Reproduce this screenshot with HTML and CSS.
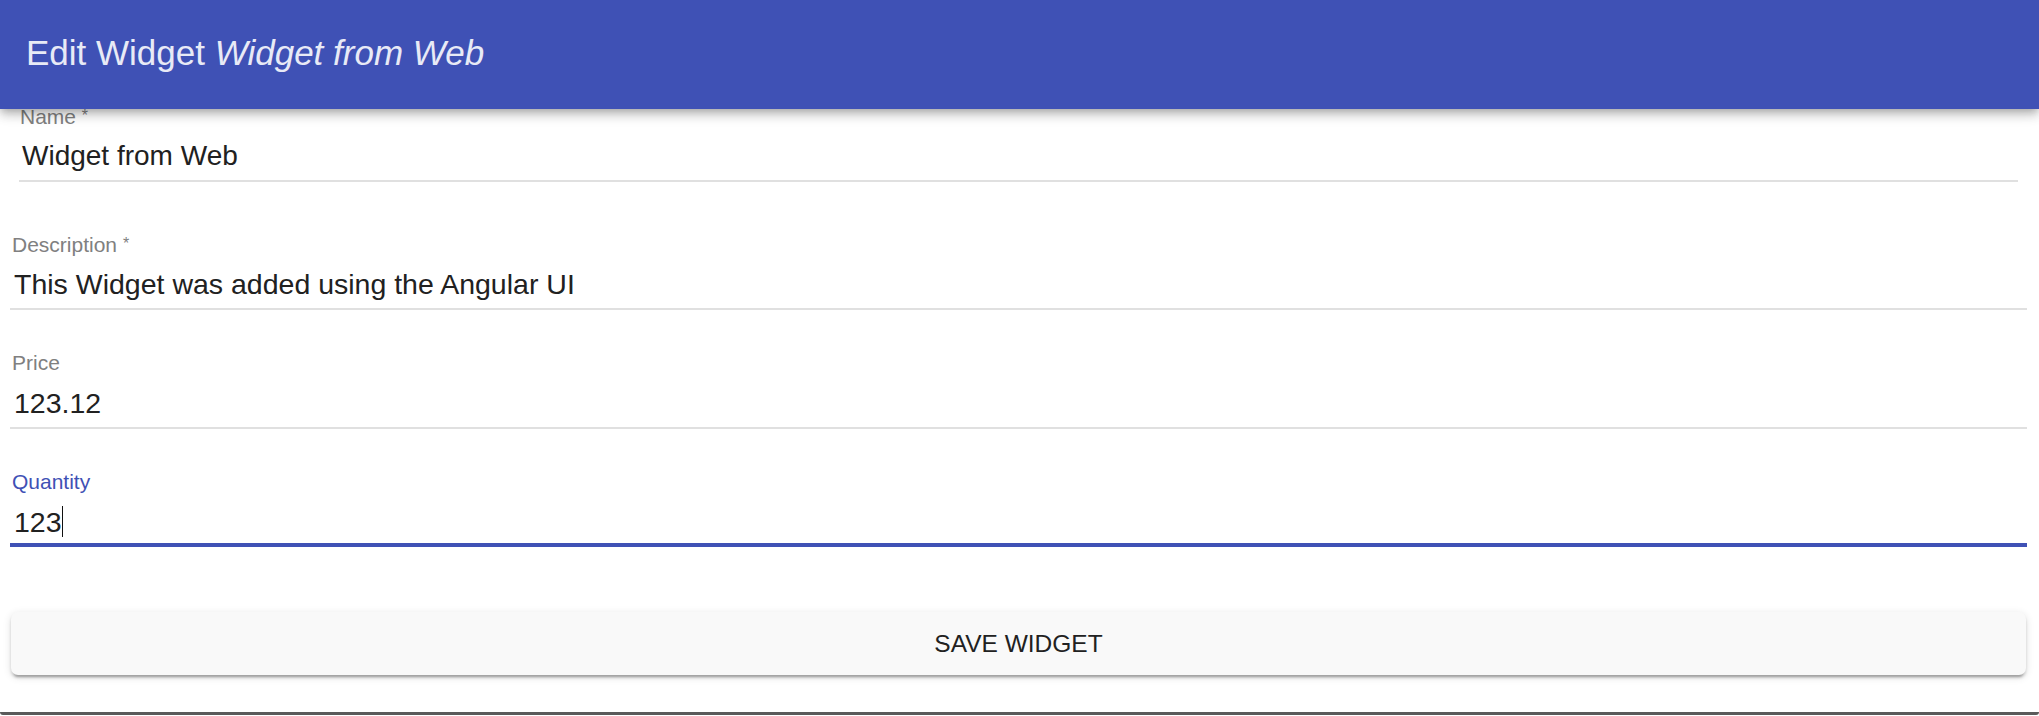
FILE: index.html
```html
<!DOCTYPE html>
<html>
<head>
    <title>Edit Widget</title>
    <link rel="stylesheet" href="styles.css">
</head>
<body>
    <div class="toolbar">
        <span class="toolbar-title">Edit Widget <em>Widget from Web</em></span>
    </div>

    <form class="widget-form">
        <div class="field field-name">
            <div class="field-label">Name <span class="req">*</span></div>
            <div class="field-value">Widget from Web</div>
            <div class="underline"></div>
        </div>

        <div class="field">
            <div class="field-label">Description <span class="req">*</span></div>
            <div class="field-value">This Widget was added using the Angular UI</div>
            <div class="underline"></div>
        </div>

        <div class="field">
            <div class="field-label">Price</div>
            <div class="field-value">123.12</div>
            <div class="underline"></div>
        </div>

        <div class="field focused">
            <div class="field-label">Quantity</div>
            <div class="field-value">123<span class="caret"></span></div>
            <div class="underline"></div>
        </div>

        <button type="button" class="save-btn">SAVE WIDGET</button>
    </form>

    <div class="frame-bottom"></div>
</body>
</html>
```

FILE: styles.css
```css
body {
    margin: 0;
    font-family: "Liberation Sans", Arial, sans-serif;
    background-color: #fff;
    color: #212121;
    overflow: hidden;
}
.toolbar {
    position: relative;
    z-index: 2;
    height: 109px;
    box-sizing: border-box;
    padding: 0 24px 4px 26px;
    display: flex;
    align-items: center;
    background-color: #3f51b5;
    box-shadow: 0 3px 7px -2px rgba(0,0,0,0.2), 0 7px 9px 0 rgba(0,0,0,0.14), 0 2px 17px 0 rgba(0,0,0,0.12);
}
.toolbar-title {
    font-size: 35px;
    color: #e8eaf6;
}
.widget-form {
    margin-top: -5px;
    padding: 0 12px 0 10px;
}
.field {
    margin-bottom: 41px;
}
.field-name {
    margin: 0 9px 50px 9px;
}
.field-label {
    font-size: 21px;
    line-height: 24px;
    height: 24px;
    color: #808080;
    padding-left: 2px;
}
.field-name .field-label {
    padding-left: 1px;
}
.req {
    font-size: 16px;
    vertical-align: 3px;
}
.field-value {
    margin-top: 10px;
    padding-left: 4px;
    font-size: 28.5px;
    line-height: 36px;
    height: 36px;
    color: #212121;
}
.field-name .field-value {
    padding-left: 3px;
    font-size: 28px;
}
.caret {
    display: inline-block;
    width: 1px;
    height: 31px;
    background-color: #111;
    vertical-align: -5px;
}
.underline {
    margin-top: 6px;
    height: 2px;
    background-color: #e0e0e0;
}
.focused .field-label {
    color: #3f51b5;
}
.focused .underline {
    margin-top: 3px;
    height: 4px;
    background-color: #3f51b5;
}
.save-btn {
    display: block;
    box-sizing: border-box;
    width: calc(100% - 2px);
    height: 63px;
    margin: 65px 0 0 1px;
    border: none;
    border-radius: 7px;
    background-color: #f9f9f9;
    font-family: "Liberation Sans", Arial, sans-serif;
    font-size: 24.5px;
    color: #212121;
    cursor: pointer;
    box-shadow: 0 5px 2px -3px rgba(0,0,0,0.2), 0 3px 3px 0 rgba(0,0,0,0.14), 0 2px 9px 0 rgba(0,0,0,0.12);
}
.frame-bottom {
    margin-top: 37px;
    height: 3px;
    background-color: #5a5a5a;
    border-radius: 0 0 6px 6px;
}
```
